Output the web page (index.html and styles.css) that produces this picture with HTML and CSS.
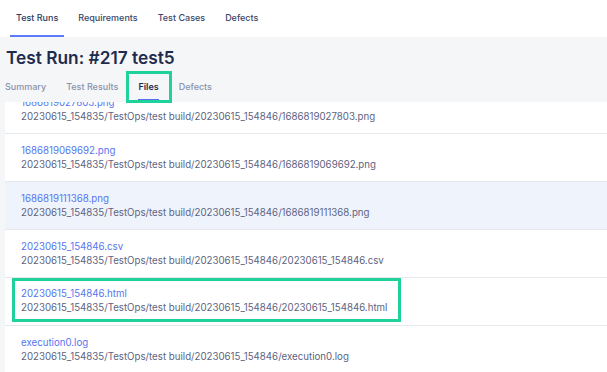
FILE: index.html
```html
<!DOCTYPE html>
<html lang="en">
<head>
  <meta charset="UTF-8">
  <meta name="viewport" content="width=device-width, initial-scale=1.0">
  <title>Test Run #217</title>
  <link rel="stylesheet" href="styles.css">
</head>
<body>

  <nav class="topnav">
    <a class="topnav-item active">Test Runs</a>
    <a class="topnav-item">Requirements</a>
    <a class="topnav-item">Test Cases</a>
    <a class="topnav-item">Defects</a>
  </nav>

  <div class="run-header">
    <h1 class="run-title">Test Run: #217 test5</h1>
    <div class="subtabs">
      <a class="subtab">Summary</a>
      <a class="subtab">Test Results</a>
      <a class="subtab active marked">Files</a>
      <a class="subtab">Defects</a>
    </div>
  </div>

  <div class="files-panel">
    <ul class="file-list">
      <li class="file-row">
        <a class="file-name">1686819027803.png</a>
        <span class="file-path">20230615_154835/TestOps/test build/20230615_154846/1686819027803.png</span>
      </li>
      <li class="file-row">
        <a class="file-name">1686819069692.png</a>
        <span class="file-path">20230615_154835/TestOps/test build/20230615_154846/1686819069692.png</span>
      </li>
      <li class="file-row hover">
        <a class="file-name">1686819111368.png</a>
        <span class="file-path">20230615_154835/TestOps/test build/20230615_154846/1686819111368.png</span>
      </li>
      <li class="file-row">
        <a class="file-name">20230615_154846.csv</a>
        <span class="file-path">20230615_154835/TestOps/test build/20230615_154846/20230615_154846.csv</span>
      </li>
      <li class="file-row top">
        <div class="file-mark">
          <a class="file-name">20230615_154846.html</a>
          <span class="file-path">20230615_154835/TestOps/test build/20230615_154846/20230615_154846.html</span>
        </div>
      </li>
      <li class="file-row">
        <a class="file-name">execution0.log</a>
        <span class="file-path">20230615_154835/TestOps/test build/20230615_154846/execution0.log</span>
      </li>
    </ul>
  </div>

</body>
</html>
```

FILE: styles.css
```css
body {
  margin: 0;
  font-family: Inter, "Noto Sans", sans-serif;
  background-color: #f5f6f8;
  color: #2d3a5c;
  height: 372px;
  overflow: hidden;
}
a {
  text-decoration: none;
  cursor: pointer;
}
.topnav {
  display: flex;
  background-color: white;
  height: 37px;
  padding-left: 10px;
}
.topnav-item {
  display: flex;
  align-items: center;
  padding: 0 6px;
  margin-right: 8px;
  font-size: 9px;
  font-weight: 500;
  color: #3b4668;
  border-bottom: 2px solid transparent;
}
.topnav-item.active {
  color: #2d3a5c;
  border-bottom-color: #5b7cf6;
}
.run-header {
  padding: 10px 0 0 6px;
  height: 55px;
}
.run-title {
  margin: 0;
  font-size: 17.3px;
  font-weight: 600;
  color: #1f2b4d;
  line-height: 22px;
}
.subtabs {
  display: flex;
  gap: 20px;
  margin-top: 6px;
  margin-left: -1px;
}
.subtab {
  position: relative;
  font-size: 9px;
  font-weight: 500;
  color: #8a93ad;
  padding: 6px 0 7px;
  border-bottom: 2px solid transparent;
}
.subtab.active {
  color: #1f2b4d;
  font-weight: 600;
  border-bottom-color: #5b6cf0;
}
.subtab.marked::after {
  content: "";
  position: absolute;
  left: -12px;
  right: -13px;
  top: -4px;
  bottom: -4px;
  border: 3px solid #1fd19a;
}
.files-panel {
  margin-left: 5px;
  background-color: white;
  height: 270px;
  overflow: hidden;
}
.file-list {
  list-style: none;
  margin: -16px 0 0 0;
  padding: 0;
}
.file-row {
  height: 47px;
  border-bottom: 1px solid #e6e8ee;
  padding: 0 0 0 16px;
  display: flex;
  flex-direction: column;
  justify-content: center;
}
.file-row.hover {
  background-color: #eff3fc;
}
.file-row.top {
  justify-content: flex-start;
}
.file-name {
  display: block;
  font-size: 9.7px;
  line-height: 14px;
  color: #5775ef;
}
.file-path {
  display: block;
  font-size: 9.7px;
  line-height: 14px;
  color: #5d6380;
}
.file-mark {
  margin-left: -9px;
  width: 377px;
  padding: 6px 0 4px 6px;
  border: 3px solid #1fd19a;
}
```
